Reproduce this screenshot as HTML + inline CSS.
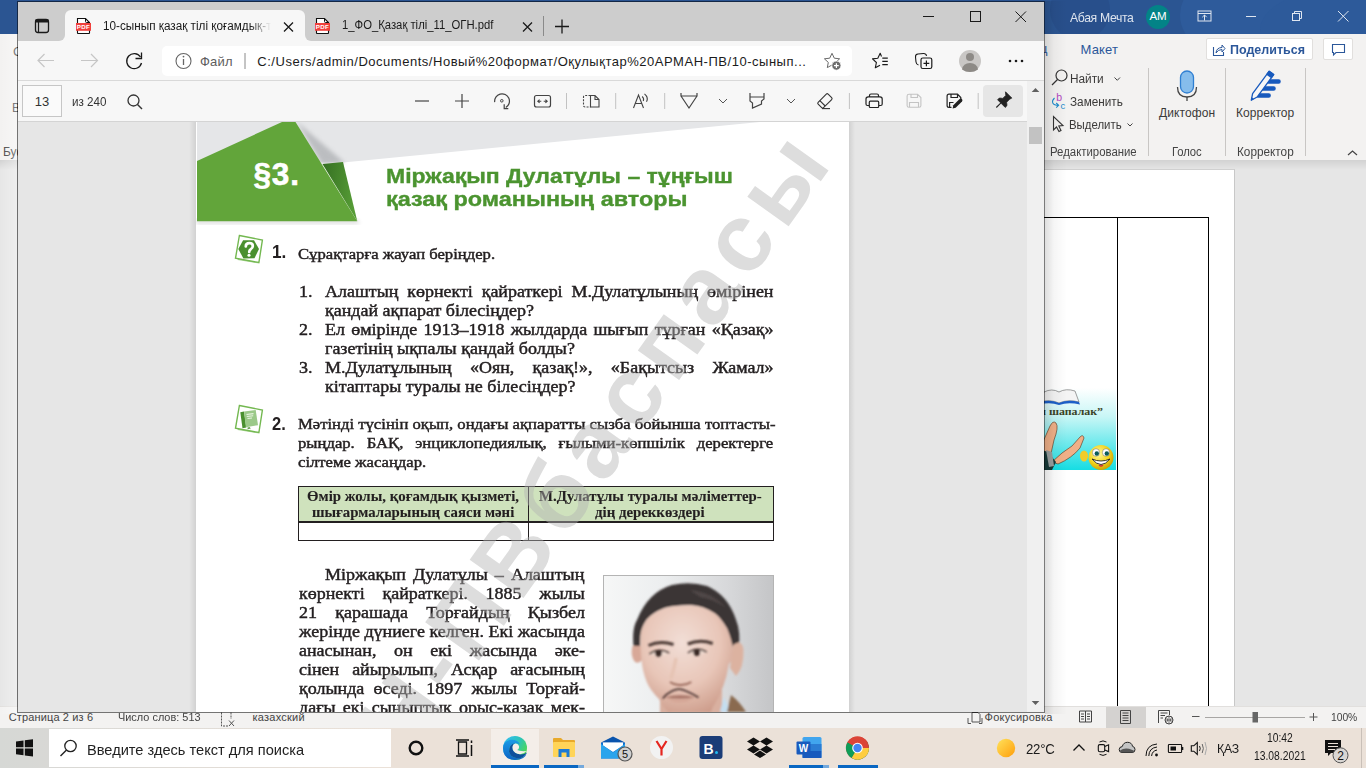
<!DOCTYPE html>
<html><head><meta charset="utf-8">
<style>
*{margin:0;padding:0;box-sizing:border-box}
html,body{width:1366px;height:768px;overflow:hidden;background:#e6e6e6;font-family:"Liberation Sans",sans-serif;position:relative}
.a{position:absolute}
.t{position:absolute;white-space:nowrap;line-height:1}
.j{text-align:justify;text-align-last:justify;white-space:nowrap}
.full{position:absolute;left:0;top:0;width:1366px;height:768px}
svg{position:absolute;left:0;top:0;overflow:visible}
</style></head><body>

<!-- WORD WINDOW -->
<div class="a" style="left:0;top:0;width:1366px;height:34px;background:#2b5592;overflow:hidden">
  <div class="a" style="left:1180px;top:-30px;width:120px;height:90px;border-radius:50%;background:#2e5b9b"></div>
  <div class="a" style="left:1260px;top:-10px;width:150px;height:80px;border-radius:50%;background:#2d5a9a"></div>
  <div class="a" style="left:1050px;top:-20px;width:60px;height:60px;border-radius:50%;background:#284f8b"></div>
</div>
<div class="t" style="left: 1070px; top: 11px; font-size: 13px; color: rgb(221, 228, 238); transform: scaleX(0.94); transform-origin: 0px 0px; letter-spacing: -0.37px;">Абая Мечта</div>
<div class="a" style="left:1146px;top:5px;width:24px;height:24px;border-radius:50%;background:#038387"></div>
<div class="t" style="left: 1146px; top: 11.37px; width: 24px; text-align: center; font-size: 11.5px; color: rgb(255, 255, 255);">AM</div>

<div class="a" style="left:0;top:34px;width:1366px;height:126px;background:#f3f2f1"></div>
<div class="t" style="left: 1080.6px; top: 43px; font-size: 13px; color: rgb(43, 87, 154); letter-spacing: 0.141px;">Макет</div>
<div class="t" style="left:1040px;top:42px;font-size:13px;color:#2b579a">ц</div>
<div class="t" style="left:3px;top:146px;font-size:12px;color:#444">Буфер</div>
<div class="t" style="left:12px;top:102px;font-size:12px;color:#444">В</div>
<div class="t" style="left:13px;top:45px;font-size:13px;color:#444">С</div>
<div class="a" style="left:1206px;top:38px;width:107px;height:22px;background:#fff;border:1px solid #e1dfdd;border-radius:2px"></div>
<div class="t" style="left: 1229.6px; top: 43.4px; font-size: 13px; font-weight: bold; color: rgb(43, 87, 154); transform: scaleX(0.9608); transform-origin: 0px 0px; letter-spacing: 0px;">Поделиться</div>
<div class="a" style="left:1323px;top:38px;width:30px;height:22px;background:#fff;border:1px solid #e1dfdd;border-radius:2px"></div>
<div class="t" style="left: 1069.8px; top: 73.04px; font-size: 12px; color: rgb(59, 58, 57); transform: scaleX(0.9839); transform-origin: 0px 0px; letter-spacing: 0px;">Найти</div>
<div class="t" style="left: 1070px; top: 95.64px; font-size: 12px; color: rgb(59, 58, 57); transform: scaleX(0.98); transform-origin: 0px 0px; letter-spacing: 0px;">Заменить</div>
<div class="t" style="left: 1069.3px; top: 119.44px; font-size: 12px; color: rgb(59, 58, 57); transform: scaleX(0.9509); transform-origin: 0px 0px; letter-spacing: 0px;">Выделить</div>
<div class="t" style="left: 1049.7px; top: 146.04px; font-size: 12px; color: rgb(68, 68, 68); transform: scaleX(0.9484); transform-origin: 0px 0px; letter-spacing: 0px;">Редактирование</div>
<div class="t" style="left: 1159px; top: 107.04px; font-size: 12px; color: rgb(59, 58, 57); letter-spacing: 0.086px;">Диктофон</div>
<div class="t" style="left: 1172.4px; top: 145.84px; font-size: 12px; color: rgb(68, 68, 68); transform: scaleX(0.94); transform-origin: 0px 0px; letter-spacing: -0.107px;">Голос</div>
<div class="t" style="left: 1236px; top: 107.04px; font-size: 12px; color: rgb(59, 58, 57); letter-spacing: 0.062px;">Корректор</div>
<div class="t" style="left: 1237px; top: 145.84px; font-size: 12px; color: rgb(68, 68, 68); transform: scaleX(0.981); transform-origin: 0px 0px; letter-spacing: 0px;">Корректор</div>

<div class="a" style="left:0;top:160px;width:1366px;height:547px;background:#e6e6e6"></div>
<div class="a" style="left:0;top:160px;width:1366px;height:10px;background:linear-gradient(#d2d2d2,#e6e6e6)"></div>
<div class="a" style="left:900px;top:169px;width:335px;height:538px;background:#fff;border-right:1px solid #c8c8c8;border-top:1px solid #d0d0d0"></div>
<svg width="1366" height="768" viewBox="0 0 1366 768">
  <defs>
   <linearGradient id="cy" x1="0" y1="0" x2="0" y2="1"><stop offset="0" stop-color="#ffffff"></stop><stop offset="0.35" stop-color="#c8f6f6"></stop><stop offset="1" stop-color="#16dde3"></stop></linearGradient>
   <radialGradient id="smile" cx="0.4" cy="0.35" r="0.7"><stop offset="0" stop-color="#fff8a0"></stop><stop offset="0.6" stop-color="#f2d31a"></stop><stop offset="1" stop-color="#c79a00"></stop></radialGradient>
  </defs>
  <rect x="1030" y="388" width="86" height="82" fill="url(#cy)"></rect>
  <path d="M1044 392 Q1052 388 1059 392 Q1066 388 1075 391 L1079 402 Q1068 399 1059 403 Q1050 399 1040 402 Z" fill="#f4f4f4" stroke="#777" stroke-width="0.7"></path>
  <path d="M1040 402 Q1050 399 1059 403 Q1068 399 1079 402 L1080 404.5 Q1068 402 1059 405 Q1050 402 1040 404.5 Z" fill="#1d5fc8"></path>
  <text x="1036" y="414.5" font-family="Liberation Serif" font-weight="bold" font-size="10.5" fill="#3a4226" textLength="67" lengthAdjust="spacingAndGlyphs">ш шапалак”</text>
  <path d="M1038 456 Q1044 438 1050 426 Q1053 420 1056 423 Q1059 427 1054 440 L1050 458 Z" fill="#f0b088" stroke="#5a3018" stroke-width="0.6"></path>
  <path d="M1052 462 Q1062 452 1072 446 L1080 437 Q1083 434 1084 438 L1080 448 Q1072 458 1058 464 Z" fill="#f0b088" stroke="#5a3018" stroke-width="0.6"></path>
  <path d="M1030 446 L1048 452 L1056 462 L1052 470 L1030 470 Z" fill="#173a38"></path>
  <path d="M1046 450 L1052 452 L1054 466 L1049 467 Z" fill="#9aa0a0"></path>
  <ellipse cx="1084" cy="456" rx="4" ry="5.5" fill="#f2cc2a"></ellipse>
  <circle cx="1101" cy="457.5" r="12.5" fill="url(#smile)"></circle>
  <ellipse cx="1096" cy="452.5" rx="3.6" ry="3.8" fill="#fff" stroke="#444" stroke-width="0.4"></ellipse><ellipse cx="1106" cy="452.5" rx="3.6" ry="3.8" fill="#fff" stroke="#444" stroke-width="0.4"></ellipse>
  <circle cx="1096.8" cy="453.5" r="2.2" fill="#0b5a5a"></circle><circle cx="1106.8" cy="453.5" r="2.2" fill="#0b5a5a"></circle>
  <path d="M1092 459 Q1101 470 1110 459 Q1101 463 1092 459 Z" fill="#fff" stroke="#222" stroke-width="0.9"></path>
  <path d="M1099 465 Q1101 467 1103 465" stroke="#d0303a" stroke-width="1.2" fill="none"></path>
</svg>
<div class="a" style="left:1116.5px;top:216.5px;width:92px;height:500px;border:1.5px solid #000"></div>
<div class="a" style="left:900px;top:216.5px;width:218px;height:1.5px;background:#000"></div>

<div class="a" style="left:0;top:706px;width:1366px;height:22px;background:#f3f2f1;border-top:1px solid #e1dfdd"></div>
<div class="a" style="left:1106px;top:707px;width:40px;height:21px;background:#d4d2d0"></div>
<div class="t" style="left: 8.7px; top: 711.69px; font-size: 11px; color: rgb(68, 68, 68); letter-spacing: 0.141px;">Страница 2 из 6</div>
<div class="t" style="left: 118.3px; top: 711.69px; font-size: 11px; color: rgb(68, 68, 68); transform: scaleX(0.9923); transform-origin: 0px 0px; letter-spacing: 0px;">Число слов: 513</div>
<div class="t" style="left: 252.5px; top: 711.69px; font-size: 11px; color: rgb(68, 68, 68); letter-spacing: 0.245px;">казахский</div>
<div class="t" style="left: 984.6px; top: 712.19px; font-size: 11px; color: rgb(68, 68, 68); letter-spacing: 0.213px;">Фокусировка</div>
<div class="t" style="left: 1331.3px; top: 711.69px; font-size: 11px; color: rgb(68, 68, 68); transform: scaleX(0.94); transform-origin: 0px 0px; letter-spacing: -0.054px;">100%</div>

<svg width="1366" height="768" viewBox="0 0 1366 768" fill="none" stroke="#1a1a1a">
  <!-- title bar icons -->
  <rect x="1198" y="11" width="13" height="10" stroke="#dfe6f0" stroke-width="1"></rect>
  <path d="M1198 13.5 H1211 M1204.5 20.5 V15 M1202.3 17.2 L1204.5 15 L1206.7 17.2" stroke="#dfe6f0" stroke-width="1"></path>
  <line x1="1246" y1="16.5" x2="1256" y2="16.5" stroke="#dfe6f0" stroke-width="1"></line>
  <rect x="1292.5" y="13.5" width="7" height="7" stroke="#dfe6f0" stroke-width="1"></rect>
  <path d="M1294.5 13.5 V11.5 H1301.5 V18.5 H1299.5" stroke="#dfe6f0" stroke-width="1"></path>
  <path d="M1338 11 L1348.5 21.5 M1348.5 11 L1338 21.5" stroke="#dfe6f0" stroke-width="1"></path>
  <!-- share icon -->
  <path d="M1213.5 47 V55.5 H1223.5 V52" stroke="#2b579a" stroke-width="1.1"></path>
  <path d="M1216 53 Q1216.5 47.5 1222 47.5 V45 L1225 48.5 L1222 52 V49.5 Q1218 49.5 1216 53 Z" stroke="#2b579a" stroke-width="1"></path>
  <!-- comment -->
  <path d="M1332.5 44.5 H1344.5 V52.5 H1336 L1333.5 55 V52.5 H1332.5 Z" stroke="#2b579a" stroke-width="1.1"></path>
  <!-- ribbon separators -->
  <line x1="1148.5" y1="68" x2="1148.5" y2="156" stroke="#c8c6c4" stroke-width="1"></line>
  <line x1="1225.5" y1="68" x2="1225.5" y2="156" stroke="#c8c6c4" stroke-width="1"></line>
  <line x1="1305.5" y1="68" x2="1305.5" y2="156" stroke="#c8c6c4" stroke-width="1"></line>
  <!-- find -->
  <circle cx="1061.5" cy="75.5" r="5.5" stroke="#333" stroke-width="1.2"></circle>
  <line x1="1057.5" y1="79.5" x2="1052" y2="85" stroke="#333" stroke-width="1.3"></line>
  <path d="M1114.5 77.5 L1117.3 80.3 L1120 77.5" stroke="#444" stroke-width="1"></path>
  <!-- replace -->
  <text x="1056.3" y="101.2" font-family="Liberation Sans" font-size="10.5" fill="#b146c2" stroke="none">b</text>
  <text x="1060.5" y="108.6" font-family="Liberation Sans" font-size="9.5" fill="#1e8bcd" stroke="none">c</text>
  <path d="M1054.5 98 Q1051.8 100.5 1052.8 103 Q1054 105.3 1058.5 105.3 M1056.2 103 L1058.6 105.3 L1056.2 107.6" stroke="#1e8bcd" stroke-width="1.1"></path>
  <!-- select -->
  <path d="M1053.5 116.5 V130 L1056.5 127 L1059 131.5 L1061 130.5 L1058.8 126 L1063 125.5 Z" stroke="#333" stroke-width="1.1"></path>
  <path d="M1127.5 123.5 L1130 126 L1132.5 123.5" stroke="#444" stroke-width="1"></path>
  <!-- mic -->
  <rect x="1180.5" y="71" width="13" height="22" rx="6.5" fill="#86bdec" stroke="#2f7fd2" stroke-width="1.3"></rect>
  <path d="M1177.5 87 Q1177.5 97 1187 97 Q1196.5 97 1196.5 87" stroke="#444" stroke-width="1.3"></path>
  <line x1="1187" y1="97" x2="1187" y2="101" stroke="#444" stroke-width="1.3"></line>
  <!-- editor pen -->
  <path d="M1268.5 81.5 H1278.6 M1263.2 88.5 H1273.6 M1258.2 95.5 H1268.7" stroke="#185abd" stroke-width="4.4" stroke-linecap="round"></path>
  <g transform="translate(1251,100.6) rotate(-53.6)">
      <path d="M0.5 0 L6.5 -2.8 H34.5 V2.8 H6.5 Z" fill="#f7f7f7" stroke="#185abd" stroke-width="1.3" stroke-linejoin="round"></path>
   <rect x="30" y="-3.4" width="5" height="6.8" rx="0.8" fill="#185abd" stroke="none"></rect>
   <path d="M0 0 L3.2 -1.5 V1.5 Z" fill="#185abd" stroke="none"></path>
  </g>
  <path d="M1348 155 L1352.5 151 L1357 155" stroke="#444" stroke-width="1.2"></path>
  <!-- status bar icons -->
  <path d="M221.5 712.5 V726 H229 M231 712.5 V719" stroke="#555" stroke-width="1" stroke-dasharray="2 1"></path>
  <path d="M229 720.5 L234 726 M234 720.5 L229 726" stroke="#555" stroke-width="1"></path>
  <path d="M968 718 V723.5 H971 M982 718 V723.5 H979 M972 712.5 H978 L980 714.5 V722 H972 Z" stroke="#555" stroke-width="1"></path>
  <path d="M1079.5 711 H1085.5 V722 H1079.5 Z M1085.5 711 H1091.5 V722 H1085.5 Z M1081 714 H1084 M1081 716.5 H1084 M1081 719 H1084 M1087 714 H1090 M1087 716.5 H1090 M1087 719 H1090" stroke="#444" stroke-width="1"></path>
  <path d="M1120.5 710.5 H1130.5 V723.5 H1120.5 Z M1122.5 713 H1128.5 M1122.5 715.5 H1128.5 M1122.5 718 H1128.5 M1122.5 720.5 H1128.5" stroke="#444" stroke-width="1"></path>
  <path d="M1158.5 723 V710.5 H1169.5 V715 M1160.5 713 H1167.5 M1160.5 715.5 H1165 M1160.5 718 H1163" stroke="#444" stroke-width="1"></path>
  <circle cx="1169" cy="720" r="4" stroke="#444" stroke-width="1" fill="#f3f2f1"></circle>
  <path d="M1165 720 H1173 M1169 716 V724 M1166.5 717.5 Q1169 720 1166.5 722.5 M1171.5 717.5 Q1169 720 1171.5 722.5" stroke="#444" stroke-width="0.7"></path>
  <line x1="1192" y1="716.5" x2="1199.5" y2="716.5" stroke="#555" stroke-width="1"></line>
  <line x1="1205" y1="717.5" x2="1305" y2="717.5" stroke="#a8a6a4" stroke-width="1"></line>
  <rect x="1252.5" y="712" width="5.5" height="10.5" fill="#666" stroke="none"></rect>
  <path d="M1309.5 717 H1317.5 M1313.5 713 V721" stroke="#555" stroke-width="1"></path>
</svg>

<!-- TASKBAR -->
<div class="a" style="left:0;top:728px;width:1366px;height:40px;background:linear-gradient(90deg,#d6d8d5 0,#d8d8d5 48px,#ebe1d8 395px)"></div>
<div class="a" style="left:49px;top:729px;width:342px;height:38px;background:#fff"></div>
<div class="t" style="left: 87.03px; top: 741.9px; font-size: 15px; color: rgb(34, 34, 34); transform: scaleX(0.9734); transform-origin: 0px 0px; letter-spacing: 0px;">Введите здесь текст для поиска</div>
<div class="a" style="left:491px;top:729px;width:48px;height:39px;background:#f4eee9"></div>
<div class="a" style="left:491px;top:765px;width:48px;height:3px;background:#0a67c2"></div>
<div class="a" style="left:544px;top:765px;width:34px;height:3px;background:#0a67c2"></div>
<div class="a" style="left:578px;top:765px;width:6px;height:3px;background:#75a9dc"></div>
<div class="a" style="left:789px;top:765px;width:34px;height:3px;background:#0a67c2"></div>
<div class="a" style="left:823px;top:765px;width:6px;height:3px;background:#75a9dc"></div>
<div class="a" style="left:838px;top:765px;width:40px;height:3px;background:#0a67c2"></div>
<div class="t" style="left: 1026px; top: 741.85px; font-size: 14px; color: rgb(26, 26, 26); transform: scaleX(0.94); transform-origin: 0px 0px; letter-spacing: -0.213px;">22°C</div>
<div class="t" style="left: 1217.06px; top: 741.7px; font-size: 13px; color: rgb(26, 26, 26); transform: scaleX(0.94); transform-origin: 0px 0px; letter-spacing: -0.219px;">ҚАЗ</div>
<div class="t" style="left: 1266.9px; top: 732.22px; font-size: 12.5px; color: rgb(26, 26, 26); transform: scaleX(0.8235); transform-origin: 0px 0px;">10:42</div>
<div class="t" style="left: 1254px; top: 750.42px; font-size: 12.5px; color: rgb(26, 26, 26); transform: scaleX(0.8258); transform-origin: 0px 0px;">13.08.2021</div>
<div class="a" style="left:1361px;top:728px;width:1px;height:40px;background:#c9c0b8"></div>
<svg width="1366" height="768" viewBox="0 0 1366 768" fill="none" stroke="#1a1a1a">
  <!-- windows logo -->
  <path d="M16 741.5 L23.5 740.5 V747.2 H16 Z M24.8 740.3 L33 739.2 V747.2 H24.8 Z M16 748.5 H23.5 V755.2 L16 754.2 Z M24.8 748.5 H33 V756.5 L24.8 755.4 Z" fill="#111" stroke="none"></path>
  <!-- search -->
  <circle cx="70.5" cy="746" r="5.7" stroke="#222" stroke-width="1.3"></circle>
  <line x1="66.5" y1="750" x2="60.5" y2="756" stroke="#222" stroke-width="1.5"></line>
  <!-- cortana -->
  <circle cx="416" cy="748" r="6.3" stroke="#111" stroke-width="2.4"></circle>
  <!-- task view -->
  <path d="M458.5 742 H466.5 V754 H458.5 Z M456 740 H469 M456 756 H469" stroke="#111" stroke-width="1.3"></path>
  <path d="M471.5 740.5 V743 M471.5 745 V756" stroke="#111" stroke-width="1.5"></path>
  <!-- edge -->
  <defs><linearGradient id="edg" x1="0" y1="0.2" x2="1" y2="0.8"><stop offset="0" stop-color="#33bdf0"></stop><stop offset="0.5" stop-color="#2cc4b8"></stop><stop offset="1" stop-color="#55dd3f"></stop></linearGradient>
  <linearGradient id="edb" x1="0" y1="0" x2="0" y2="1"><stop offset="0" stop-color="#1a9be6"></stop><stop offset="1" stop-color="#0c63c4"></stop></linearGradient></defs>
  <circle cx="515" cy="748" r="12" fill="url(#edg)" stroke="none"></circle>
  <path d="M503 748 Q503 741 510.5 739.8 Q517.5 739 520 744.5 Q517 742.5 513.5 743.5 Q508.5 745.5 509 751.5 Q510 757.5 517.5 758.3 Q523.5 758.5 527 752.5 Q525 760 515 760 Q503 759.5 503 748 Z" fill="url(#edb)" stroke="none"></path>
  <path d="M509 751.5 Q510 757.5 517.5 758.3 Q523.5 758.5 527 752.5 Q522.5 755.5 517.5 753.8 Q512.5 751.8 512.5 747.5 Q512.5 744.5 515 743.2 Q509 744 509 751.5 Z" fill="#0d4f9c" stroke="none"></path>
  <path d="M512.5 747.5 Q512.5 744 515.5 743.5 Q518 743.3 519 746 Q519.5 749 517 750 Q520 751.5 526.5 751 Q522.5 755.5 517.5 753.8 Q512.5 751.8 512.5 747.5 Z" fill="#f4eee9" stroke="none"></path>
  <!-- explorer -->
  <path d="M553 739 Q553 738 554 738 H561 L563 740 H574 Q575 740 575 741 V743 H553 Z" fill="#e8a92a" stroke="none"></path>
  <rect x="553" y="742" width="22" height="15" rx="1" fill="#ffd458" stroke="none"></rect>
  <path d="M558.5 749 H569.5 V757 H566.5 V752.5 H561.5 V757 H558.5 Z" fill="#1b7ad6" stroke="none"></path>
  <!-- mail -->
  <rect x="601" y="742.5" width="24" height="16" fill="#0f6fcf" stroke="none"></rect>
  <path d="M601 742.5 L613 736.5 L625 742.5 Z" fill="#0a54ad" stroke="none"></path>
  <path d="M603 742.5 H623 V745.5 L613 752 L603 745.5 Z" fill="#fff" stroke="none"></path>
  <path d="M601 744 L613 752.5 L625 744 V758.5 H601 Z" fill="#2aa4ec" stroke="none"></path>
  <circle cx="625" cy="754" r="7" fill="#d0d0d0" stroke="#555" stroke-width="1.2"></circle>
  <text x="625" y="758" font-family="Liberation Sans" font-size="11" fill="#111" stroke="none" text-anchor="middle">5</text>
  <!-- yandex -->
  <circle cx="661.5" cy="747.5" r="11.5" fill="#f2f2f2" stroke="none"></circle>
  <path d="M656.5 741 L661.5 749 L666.5 741 M661.5 749 V755.5" stroke="#e52620" stroke-width="2.2"></path>
  <!-- booking -->
  <rect x="699.5" y="736" width="23" height="23" rx="3" fill="#1b3d78" stroke="none"></rect>
  <text x="703.5" y="753.5" font-family="Liberation Sans" font-weight="bold" font-size="14" fill="#fff" stroke="none">B</text>
  <circle cx="716.5" cy="752.5" r="1.5" fill="#22b9f0" stroke="none"></circle>
  <!-- dropbox -->
  <path d="M753.5 737.5 L760 741.5 L753.5 745.5 L747 741.5 Z M766.5 737.5 L773 741.5 L766.5 745.5 L760 741.5 Z M753.5 745.5 L760 749.5 L753.5 753.5 L747 749.5 Z M766.5 745.5 L773 749.5 L766.5 753.5 L760 749.5 Z M760 750.5 L766 754.5 L760 758 L754 754.5 Z" fill="#111" stroke="none"></path>
  <!-- word -->
  <rect x="802.5" y="737" width="19" height="21" rx="1.5" fill="#41a5ee" stroke="none"></rect>
  <rect x="802.5" y="744" width="19" height="7" fill="#2b7cd3" stroke="none"></rect>
  <rect x="802.5" y="751" width="19" height="7" fill="#185abd" stroke="none"></rect>
  <rect x="796.5" y="741.5" width="14" height="13" rx="1" fill="#185abd" stroke="none"></rect>
  <text x="803.5" y="752" font-family="Liberation Sans" font-weight="bold" font-size="10" fill="#fff" stroke="none" text-anchor="middle">W</text>
  <!-- chrome -->
  <circle cx="857.5" cy="748" r="11.5" fill="#db4437" stroke="none"></circle>
  <path d="M857.5 748 L847.5 742.2 A11.5 11.5 0 0 0 851.7 758 Z" fill="#0f9d58" stroke="none"></path>
  <path d="M857.5 748 L851.7 758 A11.5 11.5 0 0 0 869 748 L867.5 742.2 Z" fill="#0f9d58" stroke="none"></path>
  <path d="M857.5 748 L869 748 A11.5 11.5 0 0 1 851.7 758 Z" fill="#ffcd40" stroke="none"></path>
  <path d="M857.5 748 L847.5 742.2 A11.5 11.5 0 0 1 867.5 742.2 L869 748 Z" fill="#db4437" stroke="none"></path>
  <circle cx="857.5" cy="748" r="5.3" fill="#fff" stroke="none"></circle>
  <circle cx="857.5" cy="748" r="4.2" fill="#4285f4" stroke="none"></circle>
  <!-- sun -->
  <defs><linearGradient id="sun" x1="0" y1="0" x2="1" y2="1"><stop offset="0" stop-color="#ffe25c"></stop><stop offset="1" stop-color="#ff9e0a"></stop></linearGradient></defs>
  <circle cx="1006" cy="748" r="9.2" fill="url(#sun)" stroke="none"></circle>
  <!-- tray -->
  <path d="M1073.5 750.5 L1079 745 L1084.5 750.5" stroke="#111" stroke-width="1.3"></path>
  <rect x="1098.3" y="744.6" width="6.4" height="7.2" rx="1.5" stroke="#111" stroke-width="1.1"></rect>
  <path d="M1104.7 746.5 L1108.6 744.8 V751.6 L1104.7 749.9" stroke="#111" stroke-width="1.1"></path>
  <path d="M1099.5 742 Q1103 739.8 1106.5 742 M1099.5 754.3 Q1103 756.5 1106.5 754.3" stroke="#111" stroke-width="1"></path>
  <path d="M1122 752.5 Q1119.2 752.5 1119.2 749.6 Q1119.2 746.8 1122.2 746.6 Q1123.5 742.3 1127.5 742.3 Q1131.7 742.3 1132.6 746.4 Q1135 746.8 1135 749.6 Q1135 752.5 1132 752.5 Z" fill="#c4c4c4" stroke="#222" stroke-width="1"></path>
  <path d="M1120 750.5 Q1124 747.5 1129 748.8 Q1133 750 1134.5 751 Q1133.5 752.5 1132 752.5 H1122 Q1120.5 752.5 1120 750.5 Z" fill="#555" stroke="none"></path>
  <path d="M1146 756 Q1146 745 1157 744 M1148.8 756 Q1149 748 1157 747 M1151.6 756 Q1152 751 1157 750" stroke="#111" stroke-width="1"></path>
  <circle cx="1156.5" cy="755" r="1.4" fill="#111" stroke="none"></circle>
  <rect x="1168.4" y="744.5" width="13.2" height="8" rx="0.8" stroke="#111" stroke-width="1.1"></rect>
  <rect x="1170.5" y="746.5" width="5.5" height="4" fill="#111" stroke="none"></rect>
  <rect x="1182" y="747" width="1.3" height="3" fill="#111" stroke="none"></rect>
  <path d="M1191.3 745.8 H1193.8 L1197.3 742.5 V754.5 L1193.8 751.2 H1191.3 Z" stroke="#111" stroke-width="1.1"></path>
  <path d="M1199.5 746 Q1201 748.5 1199.5 751" stroke="#222" stroke-width="1"></path>
  <path d="M1202.2 744 Q1204.5 748.5 1202.2 753" stroke="#666" stroke-width="1"></path>
  <path d="M1205 742 Q1208 748.5 1205 755" stroke="#aaa" stroke-width="1"></path>
  <!-- notifications -->
  <path d="M1325 740 H1341 V753 H1331 L1328 756 V753 H1325 Z" fill="#111" stroke="none"></path>
  <path d="M1328 743.5 H1338 M1328 746.5 H1338 M1328 749.5 H1335" stroke="#ebe1d8" stroke-width="1.2"></path>
  <circle cx="1340.5" cy="755.3" r="7.5" fill="#d9d6d3" stroke="#555" stroke-width="1"></circle>
  <text x="1340.5" y="759.8" font-family="Liberation Sans" font-size="12" fill="#111" stroke="none" text-anchor="middle">2</text>
</svg>

<div class="a" style="left:1045px;top:1px;width:22px;height:713px;background:linear-gradient(90deg,rgba(0,0,0,0.13),rgba(0,0,0,0.04) 40%,rgba(0,0,0,0))"></div>
<div class="a" style="left:0;top:34px;width:17px;height:680px;background:linear-gradient(90deg,rgba(255,255,255,0),rgba(255,255,255,0.35))"></div>
<!-- EDGE WINDOW -->
<div class="a" id="edge" style="left:17px;top:1px;width:1028px;height:712px;background:#e6e6e6;background-clip:padding-box;border:1px solid rgba(0,0,0,0.52);overflow:hidden">
 <div class="full" style="left:-18px;top:-2px">
  <div class="a" style="left:18px;top:2px;width:1026px;height:39px;background:#cdcdcd"></div>
  <!-- active tab -->
  <div class="a" style="left:65px;top:10px;width:240px;height:31px;background:#f7f7f7;border-radius:6px 6px 0 0"></div>
  <div class="a" style="left:59px;top:35px;width:6px;height:6px;background:#f7f7f7"></div>
  <div class="a" style="left:59px;top:35px;width:6px;height:6px;background:#cdcdcd;border-bottom-right-radius:6px"></div>
  <div class="a" style="left:305px;top:35px;width:6px;height:6px;background:#f7f7f7"></div>
  <div class="a" style="left:305px;top:35px;width:6px;height:6px;background:#cdcdcd;border-bottom-left-radius:6px"></div>
  <div class="a" style="left:18px;top:41px;width:1026px;height:40px;background:#f7f7f7;border-bottom:1px solid #d9d9d9"></div>
  <div class="a" style="left:162px;top:46px;width:690px;height:30px;background:#fff;border-radius:5px"></div>
  <div class="a" style="left:18px;top:81px;width:1009px;height:41px;background:#f7f7f7;border-bottom:1px solid #d4d4d4"></div>
  <div class="a" style="left:1027px;top:81px;width:17px;height:632px;background:#f0f0f0"></div>
  <div class="a" style="left:983px;top:85px;width:40px;height:32px;background:#e6e6e6;border-radius:4px"></div>
  <div class="a" style="left:22px;top:85px;width:40px;height:32px;background:#fafafa;border:1px solid #c6c6c6"></div>

  <!-- tab texts -->
  <div class="t" style="left: 103px; top: 19.54px; font-size: 12px; color: rgb(26, 26, 26); mask-image: linear-gradient(90deg, rgb(0, 0, 0) 150px, transparent 172px); transform: scaleX(0.9777); transform-origin: 0px 0px; letter-spacing: 0px;">10-сынып қазақ тілі қоғамдық-т</div>
  <div class="t" style="left: 341.7px; top: 19.44px; font-size: 12px; color: rgb(26, 26, 26); transform: scaleX(0.9407); transform-origin: 0px 0px; letter-spacing: 0px;">1_ФО_Қазақ тілі_11_ОГН.pdf</div>
  <!-- address -->
  <div class="t" style="left: 200px; top: 54.8px; font-size: 13px; color: rgb(93, 93, 93); letter-spacing: 0.208px;">Файл</div>
  <div class="t" style="left: 257.3px; top: 54.9px; font-size: 13px; color: rgb(27, 27, 27); letter-spacing: 0.526px;">C:/Users/admin/Documents/Новый%20формат/Оқулықтар%20АРМАН-ПВ/10-сынып...</div>
  <div class="t" style="left:22px;top:95px;width:40px;text-align:center;font-size:13px;color:#333">13</div>
  <div class="t" style="left: 72.3px; top: 95px; font-size: 13px; color: rgb(51, 51, 51); transform: scaleX(0.8957); transform-origin: 0px 0px;">из 240</div>

  <svg width="1366" height="768" viewBox="0 0 1366 768" fill="none" stroke="#1a1a1a" stroke-width="1.2">
   <!-- tab actions -->
   <rect x="35.5" y="19.5" width="13" height="13" rx="2.5" stroke-width="1.3"></rect>
   <rect x="35.5" y="19.5" width="13" height="3" fill="#1a1a1a" stroke="none"></rect>
   <line x1="38.5" y1="22" x2="38.5" y2="32.5"></line>
   <!-- pdf icon 1 -->
   <g transform="translate(76,18)">
    <path d="M1.5 0.5 H9.5 L13.5 4.5 V15 Q13.5 15.5 13 15.5 H2 Q1.5 15.5 1.5 15 Z" fill="#fff" stroke="#111" stroke-width="1.1"></path>
    <path d="M9.5 0.5 V3.5 Q9.5 4.5 10.5 4.5 H13.5" stroke="#111" stroke-width="1"></path>
    <rect x="0" y="5" width="15" height="7.8" fill="#f0403c" stroke="none"></rect>
    <text x="7.5" y="11.3" font-family="Liberation Sans" font-weight="bold" font-size="6.2" fill="#fff" stroke="none" text-anchor="middle" letter-spacing="0.3">PDF</text>
   </g>
   <g transform="translate(315,18)">
    <path d="M1.5 0.5 H9.5 L13.5 4.5 V15 Q13.5 15.5 13 15.5 H2 Q1.5 15.5 1.5 15 Z" fill="#fff" stroke="#111" stroke-width="1.1"></path>
    <path d="M9.5 0.5 V3.5 Q9.5 4.5 10.5 4.5 H13.5" stroke="#111" stroke-width="1"></path>
    <rect x="0" y="5" width="15" height="7.8" fill="#f0403c" stroke="none"></rect>
    <text x="7.5" y="11.3" font-family="Liberation Sans" font-weight="bold" font-size="6.2" fill="#fff" stroke="none" text-anchor="middle" letter-spacing="0.3">PDF</text>
   </g>
   <!-- tab close -->
   <path d="M284 22.5 L293 31.5 M293 22.5 L284 31.5" stroke-width="1.3"></path>
   <path d="M523 22.5 L532 31.5 M532 22.5 L523 31.5" stroke-width="1.3"></path>
   <line x1="543.5" y1="16" x2="543.5" y2="36" stroke="#8a8a8a" stroke-width="1"></line>
   <path d="M555 26.5 H569 M562 19.5 V33.5" stroke-width="1.3"></path>
   <!-- window controls -->
   <line x1="923" y1="16.5" x2="934" y2="16.5" stroke-width="1"></line>
   <rect x="970.5" y="11.5" width="10" height="10" stroke-width="1"></rect>
   <path d="M1015.5 11.5 L1026 22 M1026 11.5 L1015.5 22" stroke-width="1"></path>

   <!-- back / forward -->
   <path d="M38 60.5 H54 M44.5 54 L38 60.5 L44.5 67" stroke="#c6c6c6" stroke-width="1.2"></path>
   <path d="M81 60.5 H97.5 M91 54 L97.5 60.5 L91 67" stroke="#c6c6c6" stroke-width="1.2"></path>
   <!-- refresh -->
   <path d="M140.5 57 A7.5 7.5 0 1 0 141.5 63" stroke-width="1.3"></path>
   <path d="M141.5 52.5 V58.5 H135.5" stroke-width="1.3"></path>
   <!-- info -->
   <circle cx="183.5" cy="61" r="7.5" stroke="#666" stroke-width="1.1"></circle>
   <line x1="183.5" y1="59" x2="183.5" y2="65" stroke="#666" stroke-width="1.3"></line>
   <circle cx="183.5" cy="56.6" r="0.9" fill="#666" stroke="none"></circle>
   <line x1="245" y1="53" x2="245" y2="69" stroke="#8a8a8a" stroke-width="1"></line>
   <!-- star add -->
   <path d="M832 53.3 L834.3 58.2 L839.6 58.8 L835.7 62.4 L836.7 67.6 L832 65 L827.3 67.6 L828.3 62.4 L824.4 58.8 L829.7 58.2 Z" stroke="#6a6a6a" stroke-width="1" stroke-linejoin="round"></path>
   <circle cx="836.4" cy="65.6" r="4.6" fill="#6b6b6b" stroke="#fff" stroke-width="0.8"></circle>
   <path d="M836.4 63.2 V68 M834 65.6 H838.8" stroke="#fff" stroke-width="1.2"></path>
   <!-- favorites -->
   <path d="M881.5 56.5 L880.2 53.3 L877.8 58.3 L872.5 58.9 L876.4 62.5 L875.3 67.8 L880 65.2" stroke="#1a1a1a" stroke-width="1.1" stroke-linejoin="round"></path>
   <path d="M882.3 58.2 H887.8 M882.3 61.4 H887.8 M882.3 64.7 H887.8" stroke="#1a1a1a" stroke-width="1.2"></path>
   <!-- collections -->
   <path d="M918.5 65 Q916.3 64.5 916 62 L915.5 57 Q915.3 54.2 918 54 L923.5 53.5 Q926 53.4 926.6 55.8" stroke="#1a1a1a" stroke-width="1.1"></path>
   <rect x="921" y="58" width="10.8" height="10.5" rx="1.8" stroke="#1a1a1a" stroke-width="1.2" fill="#f7f7f7"></rect>
   <path d="M926.4 60.4 V66.2 M923.5 63.3 H929.3" stroke="#1a1a1a" stroke-width="1.2"></path>
   <!-- profile -->
   <circle cx="970" cy="61" r="11" fill="#c9c7c5" stroke="none"></circle>
   <circle cx="970" cy="57" r="4" fill="#8d8a86" stroke="none"></circle>
   <path d="M962 69.5 Q963 63 970 63 Q977 63 978 69.5 Q974.5 72 970 72 Q965.5 72 962 69.5 Z" fill="#8d8a86" stroke="none"></path>
   <!-- dots -->
   <circle cx="1010" cy="61" r="1.3" fill="#1a1a1a" stroke="none"></circle>
   <circle cx="1016" cy="61" r="1.3" fill="#1a1a1a" stroke="none"></circle>
   <circle cx="1022" cy="61" r="1.3" fill="#1a1a1a" stroke="none"></circle>

   <!-- pdf toolbar -->
   <circle cx="133.5" cy="100.5" r="5.5" stroke="#333" stroke-width="1.3"></circle>
   <line x1="137.5" y1="104.5" x2="142" y2="109" stroke="#333" stroke-width="1.4"></line>
   <line x1="415" y1="101" x2="429" y2="101" stroke="#444" stroke-width="1.2"></line>
   <path d="M455 101 H469 M462 94 V108" stroke="#444" stroke-width="1.2"></path>
   <path d="M494.7 102.2 A7.4 7.4 0 1 1 505.8 107.6" stroke="#444" stroke-width="1.2"></path>
   <path d="M504.2 104.3 V108.6 H508.3" stroke="#444" stroke-width="1.2"></path>
   <circle cx="501.8" cy="100.8" r="1.3" stroke="#444" stroke-width="1"></circle>
   <rect x="534.5" y="95.5" width="16" height="11.5" rx="2" stroke="#444" stroke-width="1.2"></rect>
   <path d="M537.8 101.2 H541.3 M543.7 101.2 H547.2 M539.6 99.6 L537.8 101.2 L539.6 102.8 M545.4 99.6 L547.2 101.2 L545.4 102.8" stroke="#444" stroke-width="1.1"></path>
   <line x1="566.5" y1="93" x2="566.5" y2="109" stroke="#c2c2c2" stroke-width="1"></line>
   <path d="M590.5 95.5 H585 Q583.5 95.5 583.5 97 V105.5 Q583.5 107 585 107 H590.5" stroke="#444" stroke-width="1.1" stroke-dasharray="2 1.3"></path>
   <path d="M590.5 95.5 H595 L599 99.5 V107 H590.5 Z M595 95.5 V99.5 H599" stroke="#444" stroke-width="1.1"></path>
   <line x1="615.7" y1="93" x2="615.7" y2="109" stroke="#c2c2c2" stroke-width="1"></line>
   <path d="M633.5 108 L638.5 95 L643.5 108 M635.3 103.5 H641.7" stroke="#444" stroke-width="1.1"></path>
   <path d="M642.2 96.5 Q644.3 98.5 643.3 101 M644.5 93.8 Q648.8 97.5 646.5 101.8" stroke="#444" stroke-width="1.1"></path>
   <line x1="664.7" y1="93" x2="664.7" y2="109" stroke="#c2c2c2" stroke-width="1"></line>
   <path d="M681 93 V96 H697 V93 M681 96 L689 108 L697 96" stroke="#444" stroke-width="1.2"></path>
   <path d="M719 99 L723 103 L727 99" stroke="#555" stroke-width="1"></path>
   <path d="M750 93 V97 H764 V93 M750 97 V101 L752.5 103 V108 L761.5 104 V101 L764 99 V97" stroke="#444" stroke-width="1.2"></path>
   <path d="M787 99 L791 103 L795 99" stroke="#555" stroke-width="1"></path>
   <g transform="translate(824.9,100.9) rotate(45)"><rect x="-3.8" y="-7.05" width="7.6" height="14.1" rx="1.3" stroke="#333" stroke-width="1.1" fill="none"></rect><line x1="-3.8" y1="3.4" x2="3.8" y2="3.4" stroke="#333" stroke-width="1.1"></line></g><line x1="822" y1="108.6" x2="830" y2="108.6" stroke="#333" stroke-width="1.1"></line>
   <line x1="849.4" y1="93" x2="849.4" y2="109" stroke="#c2c2c2" stroke-width="1"></line>
   <path d="M869.5 97 V95.5 Q869.5 94 871 94 H877 Q878.5 94 878.5 95.5 V97" stroke="#222" stroke-width="1.2"></path>
   <path d="M869 105.5 H867.5 Q866 105.5 866 104 V99 Q866 96.8 868.2 96.8 H880 Q882.2 96.8 882.2 99 V104 Q882.2 105.5 880.7 105.5 H879" stroke="#222" stroke-width="1.2"></path>
   <rect x="869.3" y="101.2" width="9.4" height="6.3" rx="1" stroke="#222" stroke-width="1.2"></rect>
   <path d="M909 94.2 H917.5 L920.9 97.6 V105.4 Q920.9 107.3 919 107.3 H909 Q907.1 107.3 907.1 105.4 V96.1 Q907.1 94.2 909 94.2 Z M911 94.2 V97.5 H917.5 V94.2 M909.5 107.3 V102.5 H918.5 V107.3" stroke="#c4c4c4" stroke-width="1.1"></path>
   <path d="M951.5 107.3 H949 Q947.1 107.3 947.1 105.4 V96.1 Q947.1 94.2 949 94.2 H957.5 L960.8 97.6 V99.5 M951 94.2 V97.5 H957.5 V94.2 M949.6 107 V102.5 H953.5" stroke="#222" stroke-width="1.2"></path>
   <path d="M952.6 108.6 L953.3 105.3 L959.6 99 Q960.8 98 961.9 99.1 Q963 100.2 962 101.4 L955.7 107.8 Z" fill="#222" stroke="none"></path>
   <line x1="978.2" y1="93" x2="978.2" y2="109" stroke="#c2c2c2" stroke-width="1"></line>
   <!-- pin -->
   <path d="M1005.5 91.8 L1011.8 98.1 L1009.6 99.2 L1006.6 102.2 L1007 105.6 L1005.2 107.4 L1001.4 103.6 L997.6 99.8 L999.4 98 L1002.8 98.4 L1005.8 95.4 Z" fill="#222" stroke="#222" stroke-width="0.8" stroke-linejoin="round"></path>
   <line x1="996.3" y1="107.5" x2="1001" y2="102.8" stroke="#222" stroke-width="1.1"></line>
   <!-- scrollbar -->
   <path d="M1031.7 92 L1035.5 88 L1039.3 92 Z" fill="#606060" stroke="none"></path>
   <rect x="1029" y="127" width="13" height="17" fill="#c2c2c2" stroke="none"></rect>
   <path d="M1031.7 701 L1035.5 705 L1039.3 701 Z" fill="#606060" stroke="none"></path>
  </svg>

  <!-- PDF CONTENT -->
  <div class="a" style="left:189px;top:122px;width:7px;height:600px;background:linear-gradient(90deg,rgba(0,0,0,0),rgba(0,0,0,0.09))"></div>
  <div class="a" style="left:849px;top:122px;width:6px;height:600px;background:linear-gradient(90deg,rgba(0,0,0,0.09),rgba(0,0,0,0))"></div>
  <div class="a" style="left:196px;top:122px;width:653px;height:600px;background:#fff;overflow:hidden">
   <div class="full" style="left:-196px;top:-122px">
    <svg width="1366" height="768" viewBox="0 0 1366 768">
     <defs>
      <linearGradient id="fold" x1="0" y1="0" x2="1" y2="0.3"><stop offset="0" stop-color="#356f22"></stop><stop offset="1" stop-color="#559b35"></stop></linearGradient>
      <filter id="blur2" x="-20%" y="-20%" width="140%" height="140%"><feGaussianBlur stdDeviation="2"></feGaussianBlur></filter>
     </defs>
     <polygon points="197,122 760,122 343,162.5 197,162.5" fill="#e5e6e8"></polygon>
     <polygon points="297,122 345,163 322,164" fill="#9a9ca0" opacity="0.55" filter="url(#blur2)"></polygon>
     <polygon points="196,219 357,219 360,224 196,224" fill="#000" opacity="0.12" filter="url(#blur2)"></polygon>
     <polygon points="197,161 282,122 295.5,122 357.3,221.3 197,221.3" fill="#62a53a"></polygon>
     <polygon points="322.5,164 343,162 357.3,221.3" fill="url(#fold)"></polygon>
     <text x="253.5" y="184.5" font-family="Liberation Sans" font-weight="bold" font-size="31.5" fill="#fff" stroke="#fff" stroke-width="0.6" letter-spacing="0.8">§3.</text>
    </svg>
    <div class="t" style="left: 386px; top: 166.4px; font-size: 20px; font-weight: bold; color: rgb(75, 148, 48); -webkit-text-stroke: 0.35px rgb(75, 148, 48); transform: scaleX(1.1501); transform-origin: 0px 0px;">Міржақып Дулатұлы – тұңғыш</div>
    <div class="t" style="left: 386px; top: 188.8px; font-size: 20px; font-weight: bold; color: rgb(75, 148, 48); -webkit-text-stroke: 0.35px rgb(75, 148, 48); transform: scaleX(1.1696); transform-origin: 0px 0px;">қазақ романының авторы</div>
<!--PAGETEXT-->
    <div class="t" style="left: 272px; top: 243.46px; font-size: 18px; font-weight: bold; color: rgb(35, 31, 32); transform: scaleX(0.9531); transform-origin: 0px 0px;">1.</div>
    <div class="t" style="left:298px;top:246.64px;font-size:15px;font-family:'Liberation Serif';color:#231f20;-webkit-text-stroke:0.45px #231f20;transform:scaleX(1.11);transform-origin:0 0;">Сұрақтарға жауап беріңдер.</div>
    <div class="t" style="left:298.5px;top:284.08px;font-size:16.5px;font-family:'Liberation Serif';color:#231f20;-webkit-text-stroke:0.45px #231f20;transform:scaleX(1.09);transform-origin:0 0;">1.</div>
    <div class="t j" style="left:325px;top:284.08px;font-size:16.5px;font-family:'Liberation Serif';color:#231f20;-webkit-text-stroke:0.45px #231f20;transform:scaleX(1.09);transform-origin:0 0;;width:411.47px">Алаштың көрнекті қайраткері М.Дулатұлының өмірінен</div>
    <div class="t" style="left:325px;top:303.13px;font-size:16.5px;font-family:'Liberation Serif';color:#231f20;-webkit-text-stroke:0.45px #231f20;transform:scaleX(1.09);transform-origin:0 0;">қандай ақпарат білесіңдер?</div>
    <div class="t" style="left:298.5px;top:322.18px;font-size:16.5px;font-family:'Liberation Serif';color:#231f20;-webkit-text-stroke:0.45px #231f20;transform:scaleX(1.09);transform-origin:0 0;">2.</div>
    <div class="t j" style="left:325px;top:322.18px;font-size:16.5px;font-family:'Liberation Serif';color:#231f20;-webkit-text-stroke:0.45px #231f20;transform:scaleX(1.09);transform-origin:0 0;;width:411.47px">Ел өмірінде 1913–1918 жылдарда шығып тұрған «Қазақ»</div>
    <div class="t" style="left:325px;top:341.23px;font-size:16.5px;font-family:'Liberation Serif';color:#231f20;-webkit-text-stroke:0.45px #231f20;transform:scaleX(1.09);transform-origin:0 0;">газетінің ықпалы қандай болды?</div>
    <div class="t" style="left:298.5px;top:360.28px;font-size:16.5px;font-family:'Liberation Serif';color:#231f20;-webkit-text-stroke:0.45px #231f20;transform:scaleX(1.09);transform-origin:0 0;">3.</div>
    <div class="t j" style="left:325px;top:360.28px;font-size:16.5px;font-family:'Liberation Serif';color:#231f20;-webkit-text-stroke:0.45px #231f20;transform:scaleX(1.09);transform-origin:0 0;;width:411.47px">М.Дулатұлының «Оян, қазақ!», «Бақытсыз Жамал»</div>
    <div class="t" style="left:325px;top:379.33px;font-size:16.5px;font-family:'Liberation Serif';color:#231f20;-webkit-text-stroke:0.45px #231f20;transform:scaleX(1.09);transform-origin:0 0;">кітаптары туралы не білесіңдер?</div>
    <div class="t" style="left: 271.6px; top: 413.52px; font-size: 19px; font-weight: bold; color: rgb(35, 31, 32); transform: scaleX(0.865); transform-origin: 0px 0px;">2.</div>
    <div class="t j" style="left:298.3px;top:417.44px;font-size:15px;font-family:'Liberation Serif';color:#231f20;-webkit-text-stroke:0.45px #231f20;transform:scaleX(1.11);transform-origin:0 0;;width:428.11px">Мәтінді түсініп оқып, ондағы ақпаратты сызба бойынша топтасты-</div>
    <div class="t j" style="left:298.3px;top:436.44px;font-size:15px;font-family:'Liberation Serif';color:#231f20;-webkit-text-stroke:0.45px #231f20;transform:scaleX(1.11);transform-origin:0 0;;width:428.11px">рыңдар. БАҚ, энциклопедиялық, ғылыми-көпшілік деректерге</div>
    <div class="t" style="left:298.3px;top:455.24px;font-size:15px;font-family:'Liberation Serif';color:#231f20;-webkit-text-stroke:0.45px #231f20;transform:scaleX(1.11);transform-origin:0 0;">сілтеме жасаңдар.</div>
    <div class="a" style="left:297.5px;top:486px;width:476.5px;height:36px;background:#cfe2bd"></div>
    <div class="a" style="left:297.5px;top:486px;width:476.5px;height:55px;border:1.3px solid #231f20"></div>
    <div class="a" style="left:297.5px;top:521.3px;width:476.5px;height:1.3px;background:#231f20"></div>
    <div class="a" style="left:527.8px;top:486px;width:1.3px;height:55px;background:#231f20"></div>
    <div class="t" style="left:307.4px;top:490.07px;font-size:14px;font-weight:bold;font-family:'Liberation Serif';color:#231f20;-webkit-text-stroke:0.1px #231f20;transform:scaleX(1.06);transform-origin:0 0">Өмір жолы, қоғамдық қызметі,</div>
    <div class="t" style="left:312.3px;top:506.17px;font-size:14px;font-weight:bold;font-family:'Liberation Serif';color:#231f20;-webkit-text-stroke:0.1px #231f20;transform:scaleX(1.06);transform-origin:0 0">шығармаларының саяси мәні</div>
    <div class="t" style="left:539.4px;top:490.07px;font-size:14px;font-weight:bold;font-family:'Liberation Serif';color:#231f20;-webkit-text-stroke:0.1px #231f20;transform:scaleX(1.06);transform-origin:0 0">М.Дулатұлы туралы мәліметтер-</div>
    <div class="t" style="left:594.7px;top:506.17px;font-size:14px;font-weight:bold;font-family:'Liberation Serif';color:#231f20;-webkit-text-stroke:0.1px #231f20;transform:scaleX(1.06);transform-origin:0 0">дің дереккөздері</div>
    <div class="t j" style="left:325.2px;top:567.08px;font-size:16.5px;font-family:'Liberation Serif';color:#231f20;-webkit-text-stroke:0.45px #231f20;transform:scaleX(1.09);transform-origin:0 0;;width:237.89px">Міржақып Дулатұлы – Алаштың</div>
    <div class="t j" style="left:298.6px;top:586.04px;font-size:16.5px;font-family:'Liberation Serif';color:#231f20;-webkit-text-stroke:0.45px #231f20;transform:scaleX(1.09);transform-origin:0 0;;width:262.29px">көрнекті қайраткері. 1885 жылы</div>
    <div class="t j" style="left:298.6px;top:605.0px;font-size:16.5px;font-family:'Liberation Serif';color:#231f20;-webkit-text-stroke:0.45px #231f20;transform:scaleX(1.09);transform-origin:0 0;;width:262.29px">21 қарашада Торғайдың Қызбел</div>
    <div class="t j" style="left:298.6px;top:623.96px;font-size:16.5px;font-family:'Liberation Serif';color:#231f20;-webkit-text-stroke:0.45px #231f20;transform:scaleX(1.09);transform-origin:0 0;;width:262.29px">жерінде дүниеге келген. Екі жасында</div>
    <div class="t j" style="left:298.6px;top:642.92px;font-size:16.5px;font-family:'Liberation Serif';color:#231f20;-webkit-text-stroke:0.45px #231f20;transform:scaleX(1.09);transform-origin:0 0;;width:262.29px">анасынан, он екі жасында әке-</div>
    <div class="t j" style="left:298.6px;top:661.88px;font-size:16.5px;font-family:'Liberation Serif';color:#231f20;-webkit-text-stroke:0.45px #231f20;transform:scaleX(1.09);transform-origin:0 0;;width:262.29px">сінен айырылып, Асқар ағасының</div>
    <div class="t j" style="left:298.6px;top:680.84px;font-size:16.5px;font-family:'Liberation Serif';color:#231f20;-webkit-text-stroke:0.45px #231f20;transform:scaleX(1.09);transform-origin:0 0;;width:262.29px">қолында өседі. 1897 жылы Торғай-</div>
    <div class="t j" style="left:298.6px;top:699.8px;font-size:16.5px;font-family:'Liberation Serif';color:#231f20;-webkit-text-stroke:0.45px #231f20;transform:scaleX(1.09);transform-origin:0 0;;width:262.29px">дағы екі сыныптық орыс-қазақ мек-</div>
<!--/PAGETEXT-->

    <!--PHOTO-->
    <svg width="1366" height="768" viewBox="0 0 1366 768">
     <defs>
      <linearGradient id="pbg" x1="0" y1="0" x2="1" y2="0"><stop offset="0" stop-color="#f6f7f7"></stop><stop offset="0.35" stop-color="#eceeef"></stop><stop offset="0.75" stop-color="#d6d7d9"></stop><stop offset="1" stop-color="#c4c5c7"></stop></linearGradient>
      <radialGradient id="skin" cx="0.45" cy="0.35" r="0.75"><stop offset="0" stop-color="#f2ded6"></stop><stop offset="0.55" stop-color="#e8c6b8"></stop><stop offset="1" stop-color="#c99684"></stop></radialGradient>
      <filter id="soft"><feGaussianBlur stdDeviation="1"></feGaussianBlur></filter>
      <filter id="soft2"><feGaussianBlur stdDeviation="0.8"></feGaussianBlur></filter>
     </defs>
     <rect x="603.5" y="575.5" width="170" height="150" fill="url(#pbg)" stroke="#b4b4b4" stroke-width="1"></rect>
     <g filter="url(#soft2)">
      <path d="M634.3 652 Q631 630 637 620 Q648 592 672 585 Q690 581 707 586 Q728 595 735.9 619.6 Q741 632 738.6 648 L736 660 L732.4 646 Q730 636 727 628.5 Q720 617 714.5 613.3 Q703 606 691.3 605.3 Q676 605 664.6 608 Q652 613 646.8 619.6 Q641 628 640.5 636 L640 652 Z" fill="#3a3434"></path>
      <path d="M690 590 Q712 592 726 608 Q716 600 700 597 Z" fill="#5a5050" opacity="0.7"></path>
      <rect x="660" y="690" width="62" height="25" fill="#d9b0a0"></rect>
      <path d="M632.5 646 Q630 656 635 662 Q639 664 642 660 L641 646 Z" fill="#d8a898"></path>
      <path d="M733 645 Q742 638 743.5 650 Q744 668 736 676 L730 668 Z" fill="#dcb2a0"></path>
      <path d="M640.5 636 Q641 628 646.8 619.6 Q652 613 664.6 608 Q676 605 691.3 605.3 Q703 606 714.5 613.3 Q720 617 727 628.5 Q732 640 733 650 Q733 660 728.8 664.2 Q727 676 723.4 685.6 Q718 700 712.7 707 L711 712 L668 712 Q662 706 659 699 Q650 690 646.8 682 Q642 670 641.4 658.8 Q640 646 640.5 636 Z" fill="url(#skin)"></path>
      <path d="M719.9 712 L724 697 L730.6 712 Z" fill="#c4def0"></path>
      <path d="M727 712 L731 695 Q740 702 746 712 Z" fill="#8a6a50"></path>
     </g>
     <g filter="url(#soft)">
      <path d="M648.5 645.5 Q660 640 673.5 644.5" stroke="#4c3a36" stroke-width="3" fill="none"></path>
      <path d="M687.8 644 Q700 639 712.7 643.5" stroke="#4c3a36" stroke-width="3" fill="none"></path>
      <path d="M650.3 654 Q659 648 668.2 654 Q659 658 650.3 654 Z" fill="#f0dcd2"></path>
      <path d="M688.7 653 Q697 647 705.6 652.5 Q697 657 688.7 653 Z" fill="#f0dcd2"></path>
      <circle cx="658.5" cy="653.3" r="3.4" fill="#3a2a26"></circle>
      <circle cx="696.8" cy="652.6" r="3.4" fill="#3a2a26"></circle>
      <path d="M649.5 654 Q659 647 669 653" stroke="#3a2a26" stroke-width="1.5" fill="none"></path>
      <path d="M688 653 Q697 646 706.5 652" stroke="#3a2a26" stroke-width="1.5" fill="none"></path>
      <path d="M676 658 Q674 670 670.5 679" stroke="#e6c4b4" stroke-width="3.5" fill="none"></path>
      <path d="M670 682 Q675 685.5 680 685 Q686 685.5 691.3 682" stroke="#9a6a5c" stroke-width="2" fill="none"></path>
      <path d="M662.8 698.5 Q666 694 672 691 Q676 689 678.9 689.1 Q682 689 686 691 Q692 693.5 698.5 697.5" stroke="#4a3430" stroke-width="1.8" fill="none"></path>
      <path d="M665 697.5 Q680 693 695 697.5 Q680 700 665 697.5 Z" fill="#a87468"></path>
      <path d="M666 699 Q680 706 694 699 Q680 701 666 699 Z" fill="#d4a494"></path>
     </g>
    </svg>
    <!--ICONS-->
    <svg width="1366" height="768" viewBox="0 0 1366 768">
     <polygon points="238,258.5 258.5,262.5 259.5,263.5 237.5,260" fill="#a8d293"></polygon>
     <polygon points="239.4,235.5 262.4,240 258.9,262.5 235.5,258.3" fill="none" stroke="#73b850" stroke-width="1.4"></polygon>
     <polygon points="243.1,240.3 254,240.3 259,248.9 254.5,258.2 243.4,258.4 238.3,249" fill="#4a9030"></polygon>
     <path d="M245.8 246.4 Q245.8 243.2 249.3 243.2 Q252.8 243.2 252.8 246 Q252.8 248 250.8 249.2 Q249.2 250.1 249.2 252" fill="none" stroke="#fff" stroke-width="2.7" stroke-linecap="round"></path><circle cx="249" cy="255.3" r="1.55" fill="#fff"></circle>
     <polygon points="238,428.5 258.5,432.5 259.5,433.5 237.5,430" fill="#a8d293"></polygon>
     <polygon points="239.4,405.5 262.4,410 258.9,432.5 235.5,428.3" fill="none" stroke="#73b850" stroke-width="1.4"></polygon>
     <polygon points="240.3,412.2 244,411.6 246.3,427.6 242.5,428.2" fill="#4a9030"></polygon>
     <polygon points="244.1,411.4 255.7,410.1 258,425.2 245.8,427.2" fill="#9bc989"></polygon>
     <path d="M246.5 414.5 L253.5 413.6 M246.8 416.5 L253.2 415.8 M247.5 418.5 L252 418" stroke="#eaf5e4" stroke-width="1.1"></path>
     <polygon points="247.5,427.5 250,427.2 250.5,429.2 249,428.6 247.8,429.5" fill="#4a9030"></polygon>
    </svg>
    <!--WATERMARK-->
    <svg width="1366" height="768" viewBox="0 0 1366 768">
     <text x="0" y="0" transform="translate(837,158.5) rotate(-54.5)" font-family="Liberation Sans" font-weight="bold" font-size="96" fill="rgb(180,180,180)" stroke="rgb(180,180,180)" stroke-width="0" opacity="0.45" text-anchor="end" letter-spacing="8">АРМАН-ПВбаспасы</text>
    </svg>
   </div>
  </div>
 </div>
</div>


</body></html>
